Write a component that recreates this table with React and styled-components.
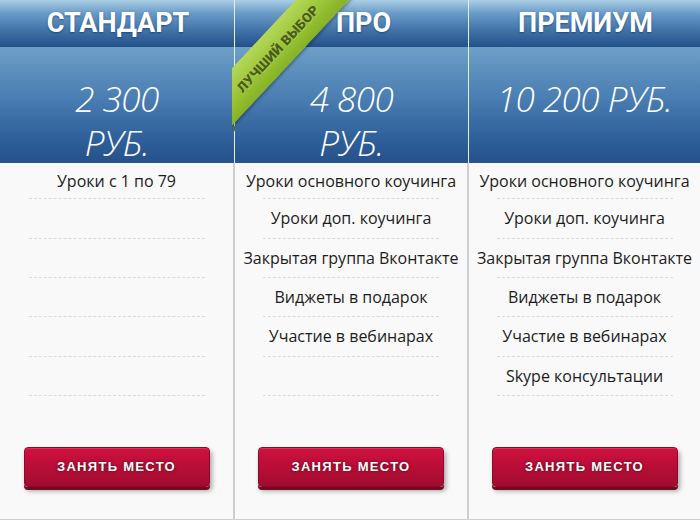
import React from 'react';
import styled, { createGlobalStyle } from 'styled-components';

const Global = createGlobalStyle`
  html, body { margin: 0; padding: 0; background: #fff; }
  #root { width: 700px; height: 522px; }
`;

const Table = styled.div`
  display: grid;
  grid-template-columns: 234px 234px 232px;
  height: 520px;
  font-family: "Open Sans", "Liberation Sans", sans-serif;
`;

const Column = styled.section`
  position: relative;
  display: flex;
  flex-direction: column;
  min-width: 0;
`;

const Header = styled.header`
  display: flex;
  flex-direction: column;
  border-left: ${p => (p.$first ? 'none' : '1px solid rgba(200, 222, 240, 0.55)')};
`;

const Title = styled.h2`
  margin: 0;
  height: 47px;
  line-height: 47px;
  padding-left: ${p => (p.$shift ? '24px' : '2px')};
  text-align: center;
  font-family: Roboto, "Liberation Sans", sans-serif;
  font-weight: 700;
  font-size: 27px;
  color: #fff;
  text-shadow: 0 1px 2px rgba(10, 40, 80, 0.55);
  background: linear-gradient(#abcfe4 0%, #6a9bc8 28%, #4475aa 62%, #23508a 100%);
`;

const Price = styled.div`
  height: 84px;
  padding-top: 30px;
  text-align: center;
  font-family: "Open Sans", "Liberation Sans", sans-serif;
  font-style: italic;
  font-weight: 300;
  font-size: 35px;
  line-height: 44px;
  color: #fff;
  letter-spacing: -0.5px;
  background: linear-gradient(#6d9fc7 0%, #4a7db2 45%, #2f609a 80%, #26528b 100%);
  border-bottom: 2px solid #2a5791;
`;

const Body = styled.div`
  flex: 1;
  display: flex;
  flex-direction: column;
  background: #f9f9f9;
  border-left: ${p => (p.$first ? 'none' : '1px solid #cfcfcf')};
  border-right: ${p => (p.$last ? 'none' : '1px solid #cfcfcf')};
  border-bottom: 1px solid #cfcfcf;
`;

const List = styled.ul`
  list-style: none;
  margin: 0;
  padding: 0;
`;

const Item = styled.li`
  box-sizing: border-box;
  width: 176px;
  height: 39.33px;
  margin: 0 auto;
  display: flex;
  align-items: center;
  justify-content: center;
  white-space: nowrap;
  border-bottom: 1px dashed #dadada;
  font-size: 16px;
  color: #1c1c1c;
  &:first-child {
    height: 36.3px;
  }
`;

const ButtonWrap = styled.div`
  display: flex;
  justify-content: center;
  padding-top: 51px;
`;

const Button = styled.button`
  box-sizing: border-box;
  width: 186px;
  height: 40px;
  border: 1px solid #8a0b27;
  border-radius: 4px;
  background: linear-gradient(#d0113f 0%, #b80e37 50%, #a20c30 100%);
  box-shadow: inset 0 1px 0 rgba(255, 255, 255, 0.15), 0 3px 0 #730a21, 2px 4px 5px rgba(0, 0, 0, 0.35);
  color: #fff;
  font-family: "Liberation Sans", Arial, sans-serif;
  font-weight: 700;
  font-size: 13px;
  letter-spacing: 1.3px;
  text-shadow: 0 0 3px rgba(0, 0, 0, 0.6);
  cursor: pointer;
  padding: 0;
`;

const RibbonClip = styled.div`
  position: absolute;
  left: -2px;
  top: 0;
  width: 140px;
  height: 140px;
  overflow: hidden;
  pointer-events: none;
  z-index: 2;
`;

const RibbonBand = styled.div`
  box-sizing: border-box;
  position: absolute;
  left: -62.8px;
  top: 26.6px;
  width: 220px;
  height: 39px;
  padding-right: 5px;
  transform: rotate(-47deg);
  background: linear-gradient(#b4d85a 0%, #a0c83e 45%, #87b225 100%);
  box-shadow: 0 2px 3px rgba(0, 0, 0, 0.3);
  display: flex;
  align-items: center;
  justify-content: center;
  font-family: Roboto, "Liberation Sans", sans-serif;
  font-weight: 900;
  font-size: 13.5px;
  letter-spacing: 0.3px;
  color: #4b5c18;
  text-shadow: 0 1px 0 rgba(210, 240, 140, 0.45);
  white-space: nowrap;
`;

const RibbonFold = styled.div`
  position: absolute;
  left: 0;
  top: 126px;
  width: 0;
  height: 0;
  border-top: 6px solid #56731a;
  border-left: 3px solid transparent;
`;

const plans = [
  { title: 'СТАНДАРТ', price: ['2 300', 'РУБ.'], features: ['Уроки с 1 по 79'] },
  {
    title: 'ПРО',
    price: ['4 800', 'РУБ.'],
    ribbon: 'ЛУЧШИЙ ВЫБОР',
    features: ['Уроки основного коучинга', 'Уроки доп. коучинга', 'Закрытая группа Вконтакте', 'Виджеты в подарок', 'Участие в вебинарах'],
  },
  {
    title: 'ПРЕМИУМ',
    price: ['10 200 РУБ.'],
    features: ['Уроки основного коучинга', 'Уроки доп. коучинга', 'Закрытая группа Вконтакте', 'Виджеты в подарок', 'Участие в вебинарах', 'Skype консультации'],
  },
];

export default function App() {
  return (
    <>
      <Global />
      <Table>
        {plans.map((plan, i) => {
          const rows = Array.from({ length: 6 }, (_, k) => plan.features[k] || '');
          const first = i === 0;
          const last = i === plans.length - 1;
          return (
            <Column key={plan.title}>
              <Header $first={first}>
                <Title $shift={!!plan.ribbon}>{plan.title}</Title>
                <Price>
                  {plan.price.map((line, k) => (
                    <React.Fragment key={k}>
                      {k > 0 && <br />}
                      {line}
                    </React.Fragment>
                  ))}
                </Price>
              </Header>
              <Body $first={first} $last={last}>
                <List>
                  {rows.map((f, k) => (
                    <Item key={k}>{f}</Item>
                  ))}
                </List>
                <ButtonWrap>
                  <Button>ЗАНЯТЬ МЕСТО</Button>
                </ButtonWrap>
              </Body>
              {plan.ribbon && (
                <RibbonClip>
                  <RibbonBand>{plan.ribbon}</RibbonBand>
                  <RibbonFold />
                </RibbonClip>
              )}
            </Column>
          );
        })}
      </Table>
    </>
  );
}
